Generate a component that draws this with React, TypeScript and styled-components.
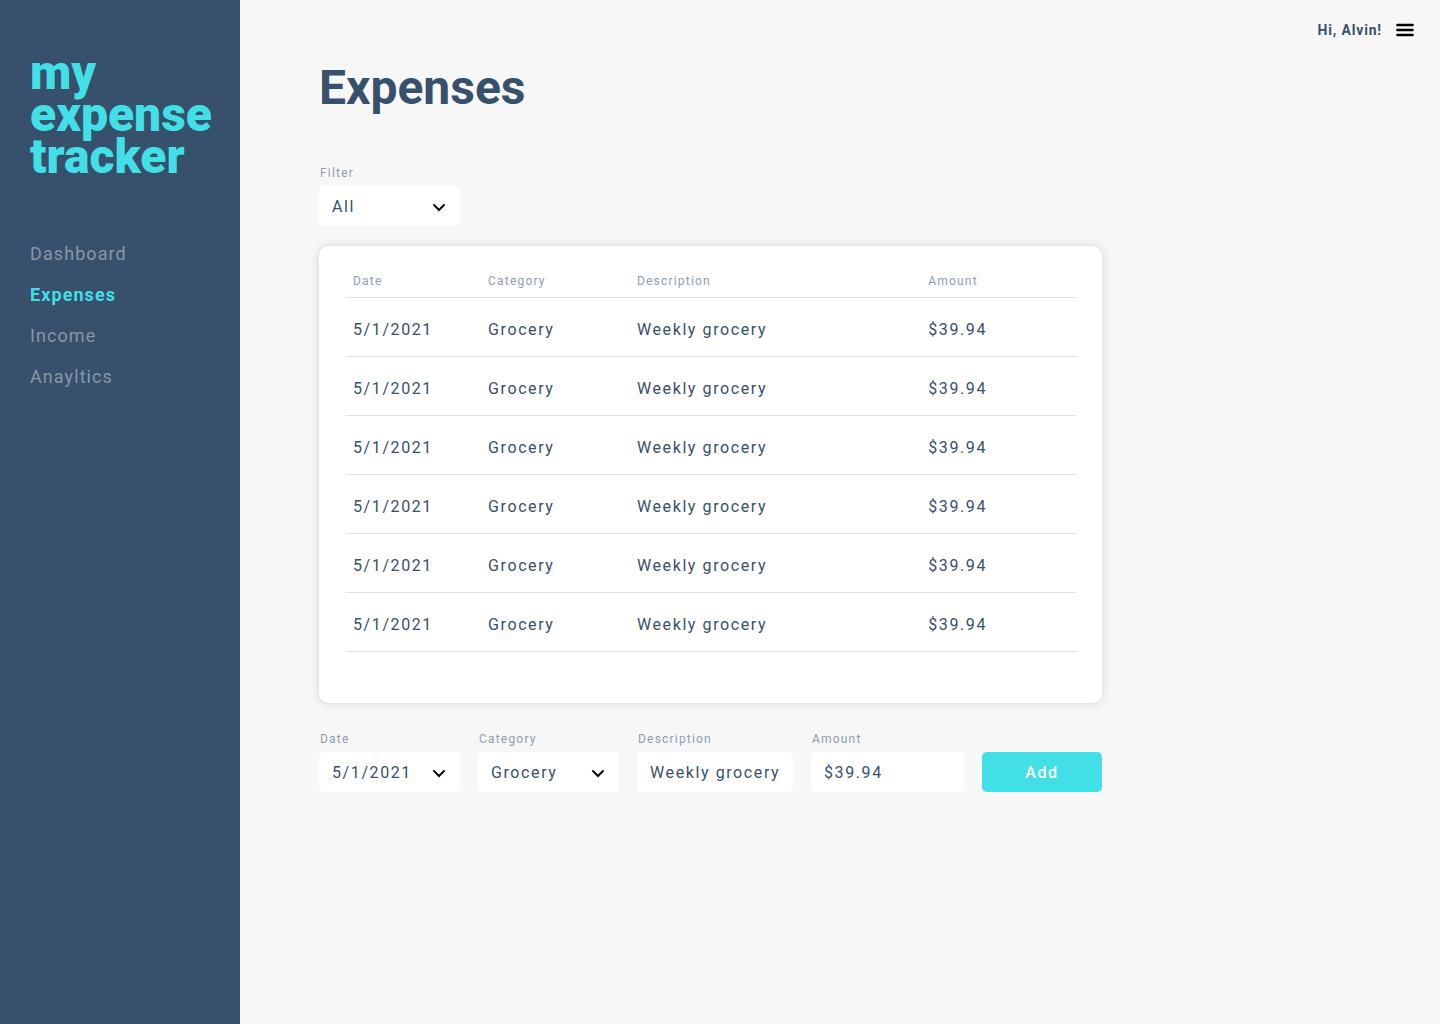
import React from "react";
import styled, { createGlobalStyle, css } from "styled-components";

const navy = "#37506b";
const aqua = "#43dfe6";
const muted = "#8c9eb2";
const page = "#f7f7f7";

const GlobalStyle = createGlobalStyle`
  * { box-sizing: border-box; }
  body {
    margin: 0;
    background: ${page};
    color: ${navy};
    font-family: Roboto, "Liberation Sans", sans-serif;
    font-size: 16px;
  }
`;

const Layout = styled.div`
  display: flex;
  min-height: 100vh;
`;

const Sidebar = styled.aside`
  flex: 0 0 240px;
  padding: 52px 0 40px 30px;
  background: ${navy};
`;

const Logo = styled.div`
  color: ${aqua};
  font-size: 48px;
  font-weight: 900;
  line-height: 42px;

  span { display: block; }
`;

const Nav = styled.nav`
  display: flex;
  flex-direction: column;
  align-items: flex-start;
  gap: 17px;
  margin-top: 64px;
`;

const NavLink = styled.a<{ $active?: boolean }>`
  color: ${({ $active }) => ($active ? aqua : "#8797a9")};
  font-size: 18px;
  font-weight: ${({ $active }) => ($active ? 700 : 400)};
  line-height: 24px;
  letter-spacing: 0.06em;
  text-decoration: none;
`;

const Main = styled.main`
  flex: 1;
  min-width: 0;
`;

const TopBar = styled.header`
  display: flex;
  justify-content: flex-end;
  align-items: center;
  gap: 14px;
  height: 60px;
  padding: 0 26px 0 0;
`;

const Greeting = styled.span`
  font-size: 14px;
  font-weight: 700;
  line-height: 16px;
  letter-spacing: 0.06em;
`;

const MenuButton = styled.button`
  display: flex;
  padding: 0;
  border: 0;
  background: none;
  cursor: pointer;
`;

const Content = styled.div`
  max-width: 862px;
  padding-left: 79px;
`;

const Title = styled.h1`
  margin: 0;
  font-size: 48px;
  font-weight: 700;
  line-height: 56px;
`;

const FilterBar = styled.form`
  width: 141px;
  margin-top: 50px;
`;

const Card = styled.section`
  margin-top: 20px;
  padding: 19px 26px 51px 27px;
  border-radius: 10px;
  background: #fff;
  box-shadow: 0 0 10px rgba(0, 0, 0, 0.15);
`;

const Table = styled.table`
  width: 100%;
  table-layout: fixed;
  border-spacing: 0;
  text-align: left;
`;

const labelText = css`
  color: ${muted};
  font-size: 12px;
  font-weight: 400;
  letter-spacing: 0.1em;
`;

const bodyText = css`
  color: ${navy};
  font-family: inherit;
  font-size: 16px;
  letter-spacing: 0.1em;
`;

const HeadCell = styled.th<{ $width: number }>`
  ${labelText}
  width: ${({ $width }) => $width}%;
  height: 33px;
  padding: 0 0 0 7px;
  border-bottom: 1px solid #dce3ea;
`;

const Cell = styled.td`
  ${bodyText}
  height: 59px;
  padding: 4px 0 0 7px;
  border-bottom: 1px solid #dce3ea;
`;

const EntryForm = styled.form`
  display: grid;
  grid-template-columns: 141fr 141fr 156fr 153fr 120fr;
  align-items: end;
  gap: 18px;
  margin-top: 29px;
`;

const Field = styled.div`
  display: flex;
  flex-direction: column;
  gap: 6px;
  min-width: 0;
`;

const Label = styled.label`
  ${labelText}
  padding-left: 1px;
  line-height: 14px;
`;

const control = css`
  ${bodyText}
  width: 100%;
  height: 40px;
  padding: 0 0 0 13px;
  border: 0;
  border-radius: 5px;
  background: #fff;
`;

const TextInput = styled.input`
  ${control}
`;

const SelectBox = styled.div`
  position: relative;

  svg {
    position: absolute;
    top: 15px;
    right: 14px;
    pointer-events: none;
  }
`;

const Select = styled.select`
  ${control}
  appearance: none;
`;

const AddButton = styled.button`
  height: 40px;
  border: 0;
  border-radius: 5px;
  background: ${aqua};
  color: #fff;
  font-family: inherit;
  font-size: 16px;
  font-weight: 500;
  letter-spacing: 0.1em;
  cursor: pointer;
`;

const Chevron = () => (
  <svg width="14" height="12" viewBox="0 0 14 12" fill="none" aria-hidden="true">
    <path d="M1.4 3.4 7 9l5.6-5.6" stroke="#000" strokeWidth="2" />
  </svg>
);

const MenuIcon = () => (
  <svg width="18" height="14" viewBox="0 0 18 14" fill="none" aria-hidden="true">
    <path d="M1.4 2h15.2M1.4 7h15.2M1.4 12h15.2" stroke="#000" strokeWidth="2.4" strokeLinecap="round" />
  </svg>
);

type SelectFieldProps = { id: string; label: string; options: string[] };

const SelectField = ({ id, label, options }: SelectFieldProps) => (
  <Field>
    <Label htmlFor={id}>{label}</Label>
    <SelectBox>
      <Select id={id}>
        {options.map((option) => (
          <option key={option}>{option}</option>
        ))}
      </Select>
      <Chevron />
    </SelectBox>
  </Field>
);

type TextFieldProps = { id: string; label: string; value: string };

const TextField = ({ id, label, value }: TextFieldProps) => (
  <Field>
    <Label htmlFor={id}>{label}</Label>
    <TextInput id={id} type="text" defaultValue={value} />
  </Field>
);

const links = ["Dashboard", "Expenses", "Income", "Anayltics"];

const columns = [
  { name: "Date", width: 18.5 },
  { name: "Category", width: 20.4 },
  { name: "Description", width: 39.9 },
  { name: "Amount", width: 21.2 },
];

const expenses = Array.from({ length: 6 }, (_, id) => ({
  id,
  date: "5/1/2021",
  category: "Grocery",
  description: "Weekly grocery",
  amount: "$39.94",
}));

export default function App() {
  return (
    <>
      <GlobalStyle />
      <Layout>
        <Sidebar>
          <Logo>
            <span>my</span>
            <span>expense</span>
            <span>tracker</span>
          </Logo>
          <Nav>
            {links.map((link) => (
              <NavLink
                key={link}
                href={`#${link.toLowerCase()}`}
                $active={link === "Expenses"}
                aria-current={link === "Expenses" ? "page" : undefined}
              >
                {link}
              </NavLink>
            ))}
          </Nav>
        </Sidebar>
        <Main>
          <TopBar>
            <Greeting>Hi, Alvin!</Greeting>
            <MenuButton type="button" aria-label="Menu">
              <MenuIcon />
            </MenuButton>
          </TopBar>
          <Content>
            <Title>Expenses</Title>
            <FilterBar>
              <SelectField id="filter" label="Filter" options={["All"]} />
            </FilterBar>
            <Card>
              <Table>
                <thead>
                  <tr>
                    {columns.map(({ name, width }) => (
                      <HeadCell key={name} scope="col" $width={width}>
                        {name}
                      </HeadCell>
                    ))}
                  </tr>
                </thead>
                <tbody>
                  {expenses.map((expense) => (
                    <tr key={expense.id}>
                      <Cell>{expense.date}</Cell>
                      <Cell>{expense.category}</Cell>
                      <Cell>{expense.description}</Cell>
                      <Cell>{expense.amount}</Cell>
                    </tr>
                  ))}
                </tbody>
              </Table>
            </Card>
            <EntryForm onSubmit={(event) => event.preventDefault()}>
              <SelectField id="date" label="Date" options={["5/1/2021"]} />
              <SelectField id="category" label="Category" options={["Grocery"]} />
              <TextField id="description" label="Description" value="Weekly grocery" />
              <TextField id="amount" label="Amount" value="$39.94" />
              <AddButton type="submit">Add</AddButton>
            </EntryForm>
          </Content>
        </Main>
      </Layout>
    </>
  );
}
